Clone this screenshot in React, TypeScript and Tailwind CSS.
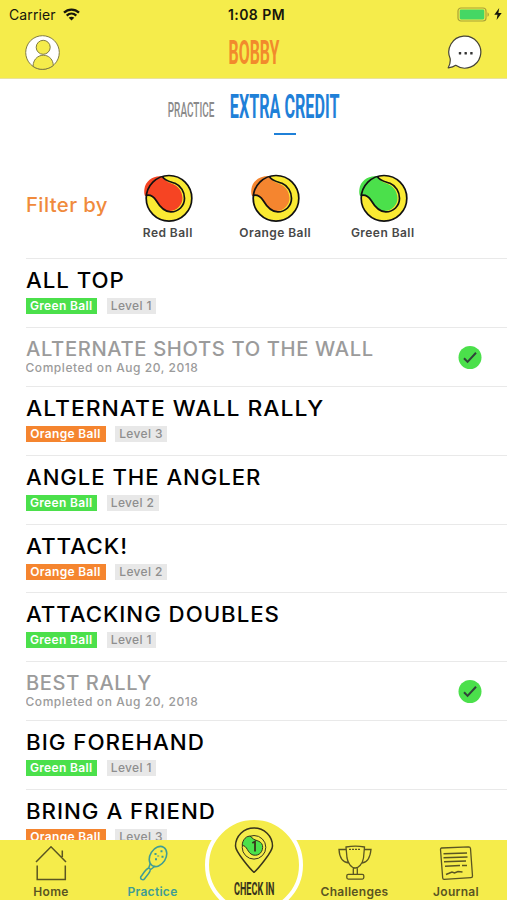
import React from 'react';
import clsx from 'clsx';

type BallColor = 'red' | 'orange' | 'green';

interface Drill {
  title: string;
  ball?: BallColor;
  level?: number;
  completedOn?: string;
  stretch: string;
}

const drills: Drill[] = [
  { title: 'ALL TOP', ball: 'green', level: 1, stretch: 'scale-x-[1.06]' },
  { title: 'ALTERNATE SHOTS TO THE WALL', completedOn: 'Aug 20, 2018', stretch: 'scale-x-[1.036]' },
  { title: 'ALTERNATE WALL RALLY', ball: 'orange', level: 3, stretch: 'scale-x-[1.09]' },
  { title: 'ANGLE THE ANGLER', ball: 'green', level: 2, stretch: 'scale-x-[1.054]' },
  { title: 'ATTACK!', ball: 'orange', level: 2, stretch: 'scale-x-[1.07]' },
  { title: 'ATTACKING DOUBLES', ball: 'green', level: 1, stretch: 'scale-x-[1.06]' },
  { title: 'BEST RALLY', completedOn: 'Aug 20, 2018', stretch: 'scale-x-[1.03]' },
  { title: 'BIG FOREHAND', ball: 'green', level: 1, stretch: 'scale-x-[1.065]' },
  { title: 'BRING A FRIEND', ball: 'orange', level: 3, stretch: 'scale-x-[1.062]' },
];

const ballFill: Record<BallColor, string> = {
  red: '#f64423',
  orange: '#f5852f',
  green: '#4be04b',
};

const BallIcon: React.FC<{ color: BallColor }> = ({ color }) => (
  <svg width="52" height="52" viewBox="0 0 52 52" fill="none">
    <circle cx="27" cy="26.300" r="22.800" fill="#faea33" />
    <path
      d="M20.500 4.500C12 3 3.500 8.500 2.400 17C2 20 2.200 22 3 24L8 23.800C14 26 16 37 25 38.800C34 40 40.500 33.500 40.500 26C40 17 34.500 13.500 29.500 11.500C25 10 22.500 8 20.500 4.500Z"
      fill={ballFill[color]}
    />
    <circle cx="27" cy="26.300" r="22.800" stroke="#111" strokeWidth="1.700" />
    <path
      d="M20.300 4.300C22 8.500 27.500 9.500 33 11.300C39 13.800 42.500 20 42.500 26.300C42.500 34 36.500 39.900 28.800 39.900C22 39.900 18 35 14.200 28.500C12 25 9 22.500 4.400 23.300"
      stroke="#111"
      strokeWidth="1.700"
    />
  </svg>
);

const FilterButton: React.FC<{ color: BallColor; label: string }> = ({ color, label }) => (
  <button className="flex w-[107.5px] flex-col items-center pt-[22px]">
    <BallIcon color={color} />
    <span className="mt-[2px] text-[12px] leading-[14px] font-semibold tracking-[0.45px] whitespace-nowrap text-[#484848]">
      {label}
    </span>
  </button>
);

const DrillRow: React.FC<{ drill: Drill }> = ({ drill }) => {
  if (drill.completedOn) {
    return (
      <li className="flex h-[59.2px] shrink-0 justify-between border-b border-[#e9e9e9] pr-[25px]">
        <div className="pt-[10px]">
          <h2
            className={clsx(
              'origin-left text-[19.5px] leading-[22px] font-medium tracking-[0.6px] whitespace-nowrap text-[#9b9b9b]',
              drill.stretch,
            )}
          >
            {drill.title}
          </h2>
          <p className="text-[12px] leading-[15px] font-medium tracking-[0.55px] text-[#9b9b9b]">
            Completed on {drill.completedOn}
          </p>
        </div>
        <svg className="mt-[18px]" width="24" height="24" viewBox="0 0 24 24" fill="none">
          <circle cx="12" cy="11.500" r="11.500" fill="#4be04b" />
          <path d="M6 12.200L9.600 15.900L18 6.800" stroke="#30433a" strokeWidth="2" />
        </svg>
      </li>
    );
  }

  return (
    <li className="h-[68.8px] shrink-0 border-b border-[#e9e9e9] pt-[9px]">
      <div className="flex">
        <h2
          className={clsx(
            'origin-left text-[21px] leading-[26px] font-medium tracking-[0.9px] whitespace-nowrap text-black',
            drill.stretch,
          )}
        >
          {drill.title}
        </h2>
      </div>
      <div className="mt-1 flex gap-[9.5px] text-[12px] leading-[15px] font-medium tracking-[0.35px] whitespace-nowrap">
        <span
          className={clsx(
            'flex h-4 justify-center font-semibold text-white',
            drill.ball === 'green' ? 'w-[71.5px] bg-[#4be04b]' : 'w-[80px] bg-[#f5852f]',
          )}
        >
          {drill.ball === 'green' ? 'Green Ball' : 'Orange Ball'}
        </span>
        <span
          className={clsx(
            'flex h-4 justify-center bg-[#e8e8e8] text-[#8e8e8e]',
            drill.level === 1 ? 'w-[49.5px]' : 'w-[52px]',
          )}
        >
          Level {drill.level}
        </span>
      </div>
    </li>
  );
};

const StatusBar = () => (
  <div className="flex h-7 items-center justify-between pr-[5px] pl-[9px] text-[#16160c]">
    <div className="flex w-[140px] items-center gap-[7px]">
      <span className="text-[14px] tracking-[0.1px]">Carrier</span>
      <svg width="17" height="13" viewBox="0 0 17 13" fill="none" stroke="currentColor" strokeWidth="2.300">
        <path d="M1 4.600C5.200 .500 11.800 .500 16 4.600" />
        <path d="M3.700 7.600C6.500 5 10.500 5 13.300 7.600" />
        <path d="M8.500 12.500L5.700 9.800C7.300 8.300 9.700 8.300 11.300 9.800Z" fill="currentColor" stroke="none" />
      </svg>
    </div>
    <span className="pl-[2px] text-[14px] font-semibold tracking-[0.45px]">1:08 PM</span>
    <div className="flex w-[140px] items-center justify-end gap-1">
      <svg width="33" height="15" viewBox="0 0 33 15" fill="none">
        <rect x="1" y="1" width="28" height="13" rx="3" stroke="#a8a237" strokeWidth="1.200" />
        <rect x="2.700" y="2.600" width="24.600" height="9.800" rx="1.300" fill="#45d764" />
        <path d="M30.500 5.200C32.400 6 32.400 9 30.500 9.800Z" fill="#a8a237" />
      </svg>
      <svg width="8" height="12" viewBox="0 0 8 12">
        <path d="M5.200 0L.300 6.700H3.500L2.600 12L7.700 5H4.400Z" fill="currentColor" />
      </svg>
    </div>
  </div>
);

const Header = () => (
  <header className="h-[79px] shrink-0 border-b border-[#e9e2a0] bg-[#f5ec4b]">
    <StatusBar />
    <div className="flex h-12 items-center justify-between px-[25px]">
      <svg width="35" height="35" viewBox="0 0 35 35" fill="none" stroke="#807b42" strokeWidth="1">
        <circle cx="17.500" cy="17.500" r="16.800" fill="#fff" />
        <circle cx="18.200" cy="12.300" r="7" fill="#f5ec4b" />
        <path d="M8 31.300C8.500 16.700 27.800 16.700 28.300 30.500C22 35.500 13.500 35.500 8 31.300Z" fill="#f5ec4b" />
      </svg>
      <div className="flex w-[52px] justify-center pt-[2px]">
        <span className="scale-x-[0.49] font-['Roboto',sans-serif] text-[32.5px] leading-none font-bold whitespace-nowrap text-[#f28a2c]">
          BOBBY
        </span>
      </div>
      <svg width="35" height="35" viewBox="0 0 35 35" fill="none">
        <path
          d="M3.200 23.700A16 16 0 1 1 8.700 30.300C6.500 32 4 32.500 1.200 32.800C3 30 3.500 27 3.200 23.700Z"
          fill="#fff"
          stroke="#45433a"
          strokeWidth="1.200"
          strokeLinejoin="round"
        />
        <g fill="#333">
          <rect x="11.800" y="17" width="2.400" height="2.400" rx=".5" />
          <rect x="17.500" y="17" width="2.400" height="2.400" rx=".5" />
          <rect x="23.200" y="17" width="2.400" height="2.400" rx=".5" />
        </g>
      </svg>
    </div>
  </header>
);

const TabItem: React.FC<{ label: string; active?: boolean; className: string; children: React.ReactNode }> = ({
  label,
  active,
  className,
  children,
}) => (
  <button
    className={clsx('flex flex-col items-center pt-[5px]', active ? 'text-[#3f9c94]' : 'text-[#5a5522]', className)}
  >
    <svg width="38" height="36" viewBox="0 0 38 36" fill="none" stroke="currentColor" strokeWidth="1.300">
      {children}
    </svg>
    <span className="mt-1 text-[12px] leading-[14px] font-semibold tracking-[0.3px]">{label}</span>
  </button>
);

const TabBar = () => (
  <nav className="relative flex h-[60px] shrink-0 bg-[#f5ec4b]">
    <TabItem label="Home" className="w-[102px]">
      <path d="M4 17L19 1.800L34 17M30.300 12V5.500M5.200 20.500V34.500H33.300V20.500" strokeWidth="1.500" />
    </TabItem>
    <TabItem label="Practice" active className="w-[101px]">
      <ellipse cx="24" cy="11.500" rx="7.800" ry="10.800" transform="rotate(32 24 11.500)" strokeWidth="1.600" />
      <path
        d="M16.500 18L14.500 23.500M21.300 21L16 25M14.200 23.300C11.500 24.500 9 29 7 31.500C5.500 34 9 36 10.800 33.500C13 30.500 16.500 27 16.300 24.500C16 23.300 15.200 23 14.200 23.300Z"
        strokeWidth="1.500"
      />
      <path d="M20.500 9H22.500M26.500 6.300H28.500M21 14.300H23M27.500 11.700H29.500M24.200 10.500V11.500" strokeWidth="2" />
    </TabItem>
    <div className="w-[101px]" />
    <TabItem label="Challenges" className="w-[101px]">
      <path d="M10 2C16 1 23 1 28.500 2L27.500 13C26.500 19 22.500 23 19.300 23C15 23 12 18 11 13ZM10 4.500H3C3.500 14 7 17.500 13 18M28.500 4.500H35C34 14 31 17.500 26 18M17.300 23V29M21.300 23V29" />
      <rect x="10.800" y="29.300" width="17" height="4.800" rx="1.500" />
      <path d="M13 4.300H24" strokeDasharray="2 1" />
    </TabItem>
    <TabItem label="Journal" className="w-[102px]">
      <path
        d="M4.500 3L31.500 1.900Q33.300 2 33.500 3.500L35.500 31Q35.500 32.600 34 32.700L7 34.300Q5.800 34.300 5.700 33L3.500 4.500Q3.500 3.200 4.500 3Z"
        strokeLinejoin="round"
      />
      <path d="M6.500 8.800L30 8M6.500 12.700L30.500 12M7 16.700L29 16M8 21.300L23 20.500M25 20.500H30" strokeWidth="1.500" />
      <path d="M9 29.500L12 28.300L15 27L17.500 28L21 26.500L25.500 27" strokeWidth="1.500" />
    </TabItem>
    <button className="absolute -top-[24px] left-[205px] flex h-[98px] w-[98px] flex-col items-center rounded-full border-4 border-white bg-[#f5ec4b] pt-[7px] text-[#38341c]">
      <svg className="shrink-0" width="40" height="46" viewBox="0 0 40 46" fill="none" stroke="currentColor">
        <path d="M20 45.300C17 43 1.500 25 1.500 19A18.500 18 0 0 1 38.500 19C38.500 25 23 43 20 45.300Z" strokeWidth="1.500" />
        <circle cx="20" cy="20.300" r="11.800" />
        <path
          d="M17 9.500C13 8 8.300 12.500 8.200 18.500C13.500 18.500 13 26 19 28C25.500 29.500 29.500 24 28.500 18.500C27 12.500 19.500 14.500 17 9.500Z"
          fill="#4be04b"
        />
        <path d="M18.300 16L21 14.500V24.500" strokeWidth="1.800" />
      </svg>
      <span className="mt-[5.5px] scale-x-[0.49] font-['Roboto',sans-serif] text-[18.5px] leading-5 font-bold whitespace-nowrap">
        CHECK IN
      </span>
    </button>
  </nav>
);

const App: React.FC = () => (
  <div className="flex h-[900px] w-[507px] flex-col overflow-hidden bg-white font-['Inter',sans-serif]">
    <Header />
    <div className="flex h-[71px] shrink-0 pl-[167px]">
      <div className="flex w-[48px] justify-center pt-5">
        <span className="scale-x-[0.475] font-['Roboto',sans-serif] text-[21px] leading-[22px] font-medium whitespace-nowrap text-[#8a8a8a]">
          PRACTICE
        </span>
      </div>
      <div className="ml-[14px] flex w-[112px] flex-col items-center pt-3">
        <span className="scale-x-[0.482] font-['Roboto',sans-serif] text-[33.5px] leading-8 font-bold whitespace-nowrap text-[#1f80d8]">
          EXTRA CREDIT
        </span>
        <div className="mt-[9.5px] h-[2.5px] w-[22px] bg-[#1f80d8]" />
      </div>
    </div>
    <section className="flex h-[108px] shrink-0 pl-[25.5px]">
      <h1 className="mt-[43px] w-[88.5px] origin-left scale-x-[1.04] text-[19.5px] leading-6 font-medium tracking-[0.4px] whitespace-nowrap text-[#f08a3c]">
        Filter by
      </h1>
      <FilterButton color="red" label="Red Ball" />
      <FilterButton color="orange" label="Orange Ball" />
      <FilterButton color="green" label="Green Ball" />
    </section>
    <ul className="ml-[25.5px] flex min-h-0 flex-1 flex-col overflow-hidden border-t border-[#e9e9e9]">
      {drills.map((drill) => (
        <DrillRow key={drill.title} drill={drill} />
      ))}
    </ul>
    <TabBar />
  </div>
);

export default App;
